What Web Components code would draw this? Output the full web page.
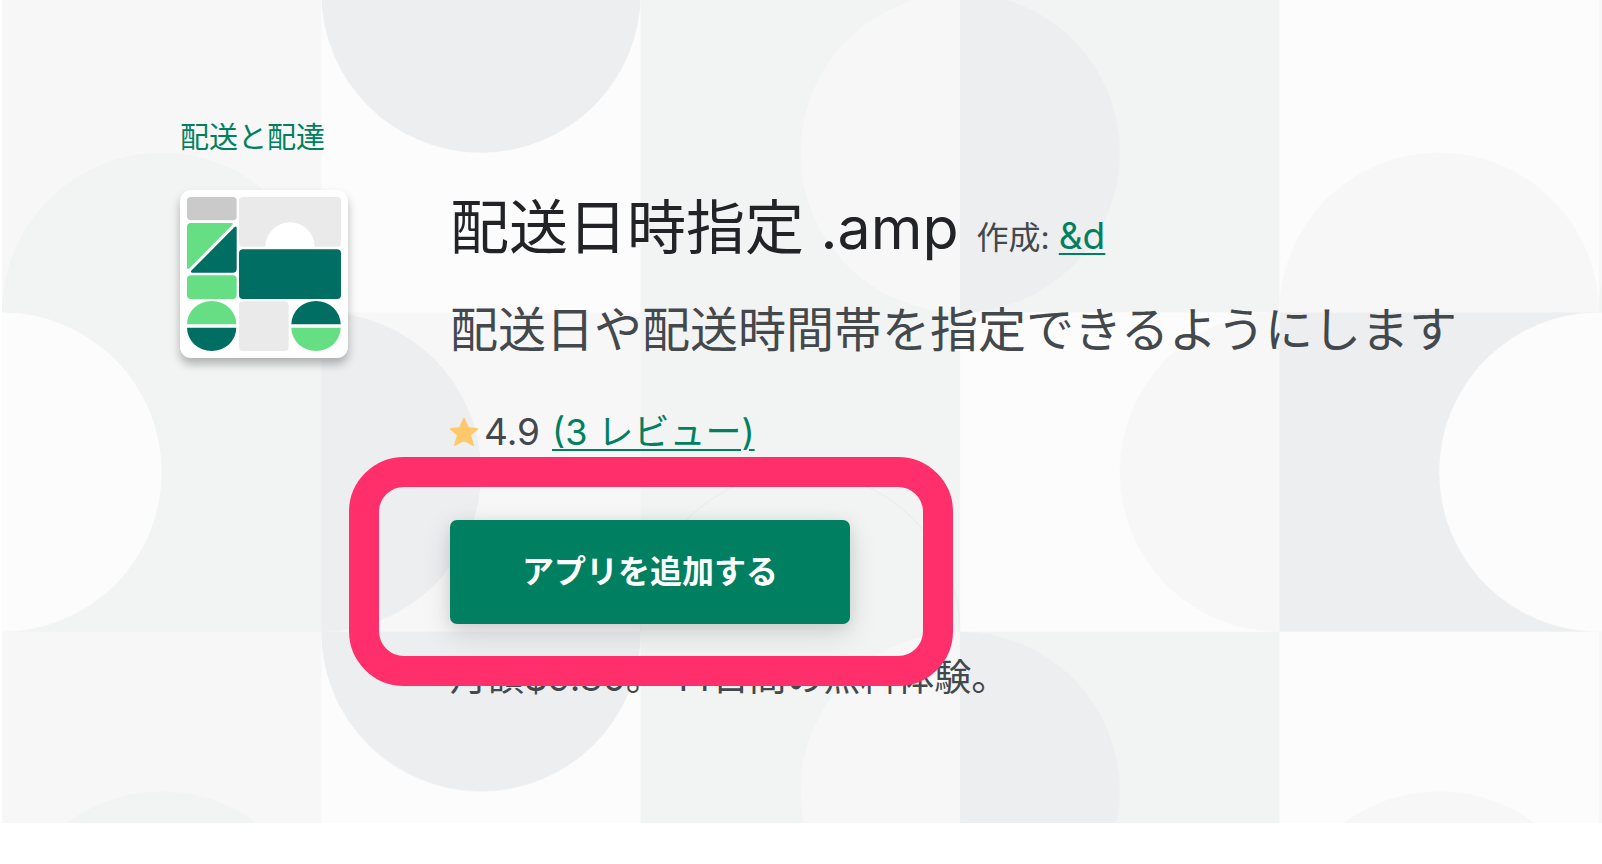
<!DOCTYPE html>
<html lang="ja">
<head>
<meta charset="utf-8">
<meta name="viewport" content="width=device-width, initial-scale=1">
<title>配送日時指定 .amp</title>
<style>
  body { margin: 0; background: #fff; color: #43484c; font-family: Inter, "Noto Sans CJK JP", sans-serif; }
</style>
</head>
<body>
<app-hero>
  <category-link slot="category" href="#shipping">配送と配達</category-link>
  <app-icon slot="icon"></app-icon>
  <app-heading slot="heading" name="配送日時指定 .amp" author="&amp;d"></app-heading>
  <app-tagline slot="details">配送日や配送時間帯を指定できるようにします</app-tagline>
  <app-rating slot="details" score="4.9" count="3"></app-rating>
  <highlight-frame slot="details"><install-button>アプリを追加する</install-button></highlight-frame>
  <app-price slot="details">月額$9.80。 14日間の無料体験。</app-price>
</app-hero>
<script>
const define = (name, render) => customElements.define(name, class extends HTMLElement {
  connectedCallback() {
    if (this.shadowRoot) return;
    this.attachShadow({ mode: 'open' }).innerHTML = render(this);
  }
});
const esc = s => s.replace(/&/g, '&amp;').replace(/</g, '&lt;');

define('shape-pattern', () => `
<style>
  :host { display: block; position: absolute; inset: 0 0 0 2px; overflow: hidden; }
  svg { display: block; width: 100%; height: 100%; }
</style>
<svg aria-hidden="true">
  <defs>
    <pattern id="tiles" patternUnits="userSpaceOnUse" width="1600" height="640" patternTransform="translate(0 -7) scale(.998)">
      <rect width="1600" height="640" fill="#f7f7f7"/>
      <path d="M0 320a160 160 0 0 1 320 0z" fill="#f1f4f3"/>
      <path d="M320 0h320v320H320z" fill="#fcfcfc"/>
      <path d="M320 0a160 160 0 0 0 320 0z" fill="#edeef0"/>
      <path d="M640 0h640v320H640z" fill="#f1f4f3"/>
      <path d="M960 0a160 160 0 0 0 0 320z" fill="#f7f7f7"/>
      <path d="M960 0a160 160 0 0 1 0 320z" fill="#edeef0"/>
      <path d="M1280 0h320v320h-320z" fill="#fcfcfc"/>
      <path d="M1280 320a160 160 0 0 1 320 0z" fill="#f7f7f7"/>
      <path d="M0 320h320v320H0z" fill="#f1f4f3"/>
      <path d="M0 320a160 160 0 0 1 0 320z" fill="#fcfcfc"/>
      <path d="M320 320a160 160 0 0 1 0 320z" fill="#edeef0"/>
      <path d="M640 320h320v320H640z" fill="#f1f4f3"/>
      <path d="M640 640a160 160 0 0 1 320 0" fill="none" stroke="#e7eae9"/>
      <path d="M960 320h320v320H960z" fill="#fcfcfc"/>
      <path d="M1280 320a160 160 0 0 0 0 320z" fill="#f7f7f7"/>
      <path d="M1280 320h320v320h-320z" fill="#edeef0"/>
      <path d="M1600 320a160 160 0 0 0 0 320z" fill="#fcfcfc"/>
    </pattern>
  </defs>
  <rect width="100%" height="100%" fill="url(#tiles)"/>
</svg>`);

define('app-hero', () => `
<style>
  :host { display: block; position: relative; }
  section { position: relative; padding: 116px 100px 117px 180px; }
  .row { display: grid; grid-template-columns: 168px 1fr; column-gap: 102px; margin-top: 30px; align-items: start; }
  .details { display: flex; flex-direction: column; align-items: flex-start; }
</style>
<shape-pattern></shape-pattern>
<section>
  <slot name="category"></slot>
  <div class="row">
    <slot name="icon"></slot>
    <div class="details"><slot name="heading"></slot><slot name="details"></slot></div>
  </div>
</section>`);

define('category-link', el => `
<style>
  :host { display: block; font-size: 29px; line-height: 44px; }
  a { color: #008060; text-decoration: none; }
</style>
<a href="${el.getAttribute('href')}"><slot></slot></a>`);

define('app-icon', () => `
<style>
  :host { display: block; width: 168px; height: 168px; border-radius: 11px; background: #fff;
    box-shadow: 0 6px 10px rgba(0,0,0,.28); }
  svg { display: block; width: 100%; height: 100%; }
</style>
<svg viewBox="0 0 504 504" role="img" aria-label="配送日時指定 .amp">
  <rect x="21" y="21" width="149" height="70" rx="12" fill="#cacaca"/>
  <rect x="177" y="21" width="306" height="149" rx="12" fill="#eaeaea"/>
  <path d="M256 171a74 74 0 0 1 148 0z" fill="#fff"/>
  <path d="M33 99h121q8 0 3 5L29 234q-8 7-8-2V111q0-12 12-12z" fill="#66de83"/>
  <path d="M170 115v121q0 12-12 12H38q-9 0-3-7L163 112q7-6 7 3z" fill="#006e62"/>
  <rect x="177" y="178" width="306" height="149" rx="12" fill="#006e62"/>
  <rect x="21" y="256" width="149" height="71" rx="12" fill="#66de83"/>
  <path d="M21 403a74 70 0 0 1 148 0z" fill="#66de83"/>
  <path d="M21 413a74 70 0 0 0 148 0z" fill="#006e62"/>
  <rect x="177" y="334" width="149" height="149" rx="12" fill="#eaeaea"/>
  <path d="M334 403a74 70 0 0 1 148 0z" fill="#006e62"/>
  <path d="M334 413a74 70 0 0 0 148 0z" fill="#66de83"/>
</svg>`);

define('app-heading', el => `
<style>
  :host { display: flex; align-items: baseline; gap: 18px; line-height: 76px; }
  h1 { margin: 0; font-size: 59px; font-weight: 400; color: #212326; }
  span { font-size: 32px; }
  a { font-size: 37px; color: #008060; text-decoration-thickness: 2px; text-underline-offset: 4px; }
</style>
<h1>${esc(el.getAttribute('name'))}</h1>
<span>作成: <a href="#developer">${esc(el.getAttribute('author'))}</a></span>`);

define('app-tagline', () => `
<style>
  :host { display: block; margin-top: 18px; }
  p { margin: 0; font-size: 48px; line-height: 72px; }
</style>
<p><slot></slot></p>`);

define('app-rating', el => `
<style>
  :host { display: flex; align-items: center; margin-top: 38px; font-size: 37px; line-height: 56px; }
  svg { width: 28px; height: 28px; margin-right: 6px; }
  a { margin-left: 12px; font-size: 36px; color: #008060; text-decoration-thickness: 2px; text-underline-offset: 4px; }
</style>
<svg viewBox="0 0 28 28" aria-hidden="true"><path d="M14 1l4 9 9 1-7 6 3 10-9-5-9 5 3-10-7-6 9-1z" fill="#ffc96b" stroke="#ffc96b" stroke-width="2" stroke-linejoin="round"/></svg>
<span>${el.getAttribute('score')}</span>
<a href="#reviews">(${el.getAttribute('count')} レビュー)</a>`);

define('highlight-frame', () => `
<style>
  :host { display: block; position: relative; margin-top: 60px; }
  .frame { position: absolute; inset: -63px -103px -62px -101px; border: 30px solid #ff2f6c;
    border-radius: 55px; pointer-events: none; z-index: 1; }
</style>
<slot></slot><div class="frame"></div>`);

define('install-button', () => `
<style>
  :host { display: block; }
  button { display: block; min-width: 400px; padding: 28px 72px; border: 0; border-radius: 7px; background: #008060;
    color: #fff; font: 700 32px/48px Inter, "Noto Sans CJK JP", sans-serif; cursor: pointer;
    box-shadow: 0 10px 30px rgba(0,0,0,.13), 0 2px 14px rgba(0,0,0,.08); }
</style>
<button type="button"><slot></slot></button>`);

define('app-price', () => `
<style>
  :host { display: block; margin-top: 26px; }
  p { margin: 0; font-size: 37px; line-height: 56px; }
</style>
<p><slot></slot></p>`);
</script>
</body>
</html>
